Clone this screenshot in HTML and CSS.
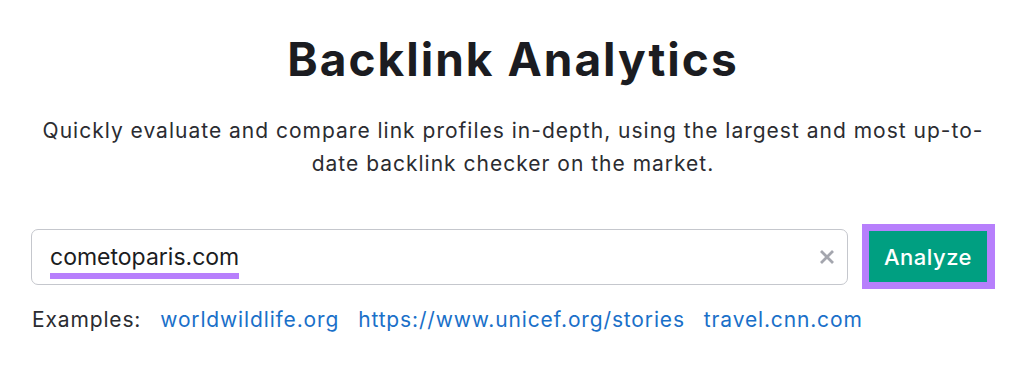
FILE: index.html
```html
<!DOCTYPE html>
<html lang="en">
<head>
<meta charset="utf-8">
<title>Backlink Analytics</title>
<link rel="stylesheet" href="styles.css">
</head>
<body>
<main class="page">
  <h1 class="title">Backlink Analytics</h1>
  <p class="subtitle">Quickly evaluate and compare link profiles in-depth, using the largest and most up-to-date backlink checker on the market.</p>
  <div class="search-row">
    <div class="search-box">
      <span class="query">cometoparis.com</span>
      <svg class="clear" width="16" height="16" viewBox="0 0 16 16" aria-hidden="true">
        <path d="M2 2 L14 14 M14 2 L2 14" stroke="#a4a6ae" stroke-width="2.8" stroke-linecap="butt"/>
      </svg>
    </div>
    <div class="btn-frame">
      <button class="analyze">Analyze</button>
    </div>
  </div>
  <div class="examples">
    <span class="examples-label">Examples:</span>
    <a class="example" href="#">worldwildlife.org</a>
    <a class="example" href="#">https://www.unicef.org/stories</a>
    <a class="example" href="#">travel.cnn.com</a>
  </div>
</main>
</body>
</html>
```
FILE: styles.css
```css
* { box-sizing: border-box; }
html, body { margin: 0; padding: 0; background: #ffffff; }
body {
  font-family: Inter, "Noto Sans", sans-serif;
  color: #1f2026;
  width: 1024px;
  height: 374px;
  overflow: hidden;
}
.page {
  display: flex;
  flex-direction: column;
  align-items: center;
  padding: 25px 29px 0 31px;
}
.title {
  margin: 0;
  font-size: 46px;
  line-height: 68px;
  font-weight: 700;
  letter-spacing: 2px;
  color: #1b1c21;
}
.subtitle {
  margin: 0;
  margin-top: 21px;
  width: 964px;
  font-size: 21px;
  line-height: 33px;
  letter-spacing: 1px;
  text-align: center;
  color: #2b2c31;
}
.search-row {
  align-self: stretch;
  display: flex;
  align-items: center;
  gap: 14px;
  margin-top: 44px;
}
.search-box {
  flex: 1;
  height: 56px;
  border: 1px solid #c5c7cd;
  border-radius: 7px;
  display: flex;
  align-items: center;
  justify-content: space-between;
  padding: 0 12px 0 18px;
}
.query {
  display: block;
  font-size: 23px;
  line-height: 28px;
  color: #1b1c21;
  border-bottom: 6px solid #b77ffc;
  padding-bottom: 2px;
  margin-top: 8px;
}
.clear { display: block; }
.btn-frame {
  background: #b77ffc;
  padding: 7px 8px 7px 7px;
}
.analyze {
  display: block;
  width: 118px;
  height: 51px;
  border: 0;
  background: #009f81;
  color: #ffffff;
  font-family: Inter, "Noto Sans", sans-serif;
  font-size: 22px;
  font-weight: 500;
  letter-spacing: 0.5px;
  padding: 0;
}
.examples {
  align-self: stretch;
  display: flex;
  align-items: baseline;
  gap: 19px;
  margin-top: 17px;
  padding-left: 1px;
  font-size: 21px;
  line-height: 28px;
  letter-spacing: 0.85px;
}
.examples-label { color: #2b2c31; }
.example { color: #1a70c9; text-decoration: none; }
```
